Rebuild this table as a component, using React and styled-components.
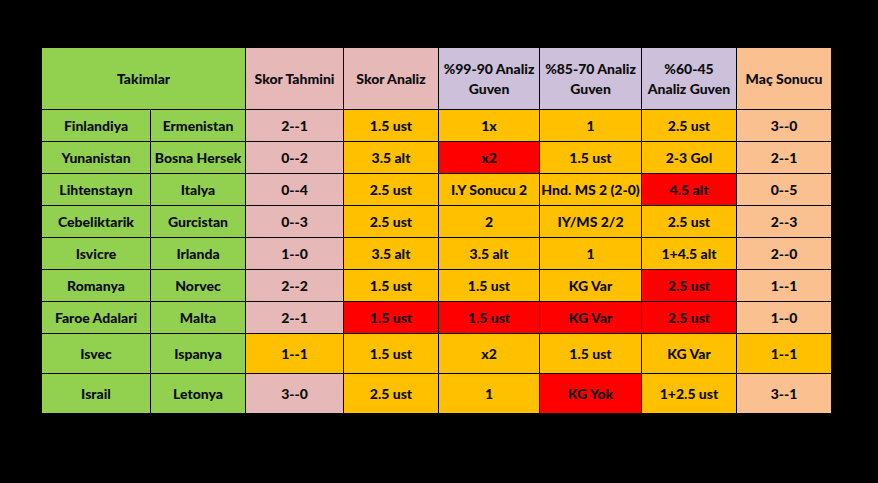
import React from 'react';
import styled, { createGlobalStyle } from 'styled-components';

const GlobalStyle = createGlobalStyle`
    html, body {
        margin: 0;
        padding: 0;
        background: #000;
    }
    body {
        width: 878px;
        height: 483px;
        overflow: hidden;
        font-family: Lato, "Open Sans", "Liberation Sans", sans-serif;
    }
`;

const COLORS = {
    green: '#92d050',
    pink: '#e6b8b7',
    lilac: '#ccc0da',
    orange: '#ffc000',
    red: '#ff0000',
    peach: '#fac090',
};

const Page = styled.div`
    padding: 47px 0 0 41px;
`;

const Table = styled.table`
    border-collapse: collapse;
    table-layout: fixed;
    width: 790px;
    border: 1px solid #000;
`;

const HeadCell = styled.th`
    height: 61px;
    padding: 0 1px;
    border: 1px solid #000;
    background: ${(p) => COLORS[p.$tone]};
    color: #0d0d0d;
    font-size: 14px;
    font-weight: 900;
    line-height: 20px;
    text-align: center;
    white-space: nowrap;
`;

const Cell = styled.td`
    height: ${(p) => (p.$tall ? 39 : 31)}px;
    padding: 0 1px;
    border: 1px solid #000;
    background: ${(p) => COLORS[p.$tone]};
    color: #0d0d0d;
    font-size: 14px;
    font-weight: 900;
    text-align: center;
    white-space: nowrap;
`;

const widths = [109, 95, 98, 95, 101, 102, 95, 95];

// [home, away, [text, tone] x6, tall]
const rows = [
    ['Finlandiya', 'Ermenistan', [['2--1', 'pink'], ['1.5 ust', 'orange'], ['1x', 'orange'], ['1', 'orange'], ['2.5 ust', 'orange'], ['3--0', 'peach']]],
    ['Yunanistan', 'Bosna Hersek', [['0--2', 'pink'], ['3.5 alt', 'orange'], ['x2', 'red'], ['1.5 ust', 'orange'], ['2-3 Gol', 'orange'], ['2--1', 'peach']]],
    ['Lihtenstayn', 'Italya', [['0--4', 'pink'], ['2.5 ust', 'orange'], ['I.Y Sonucu 2', 'orange'], ['Hnd. MS 2 (2-0)', 'orange'], ['4.5 alt', 'red'], ['0--5', 'peach']]],
    ['Cebeliktarik', 'Gurcistan', [['0--3', 'pink'], ['2.5 ust', 'orange'], ['2', 'orange'], ['IY/MS 2/2', 'orange'], ['2.5 ust', 'orange'], ['2--3', 'peach']]],
    ['Isvicre', 'Irlanda', [['1--0', 'pink'], ['3.5 alt', 'orange'], ['3.5 alt', 'orange'], ['1', 'orange'], ['1+4.5 alt', 'orange'], ['2--0', 'peach']]],
    ['Romanya', 'Norvec', [['2--2', 'pink'], ['1.5 ust', 'orange'], ['1.5 ust', 'orange'], ['KG Var', 'orange'], ['2.5 ust', 'red'], ['1--1', 'peach']]],
    ['Faroe Adalari', 'Malta', [['2--1', 'pink'], ['1.5 ust', 'red'], ['1.5 ust', 'red'], ['KG Var', 'red'], ['2.5 ust', 'red'], ['1--0', 'peach']]],
    ['Isvec', 'Ispanya', [['1--1', 'orange'], ['1.5 ust', 'orange'], ['x2', 'orange'], ['1.5 ust', 'orange'], ['KG Var', 'orange'], ['1--1', 'orange']], true],
    ['Israil', 'Letonya', [['3--0', 'pink'], ['2.5 ust', 'orange'], ['1', 'orange'], ['KG Yok', 'red'], ['1+2.5 ust', 'orange'], ['3--1', 'peach']], true],
];

export default function App() {
    return (
        <Page>
            <GlobalStyle />
            <Table>
                <colgroup>
                    {widths.map((w, i) => (
                        <col key={i} style={{ width: w }} />
                    ))}
                </colgroup>
                <thead>
                    <tr>
                        <HeadCell $tone="green" colSpan={2}>Takimlar</HeadCell>
                        <HeadCell $tone="pink">Skor Tahmini</HeadCell>
                        <HeadCell $tone="pink">Skor Analiz</HeadCell>
                        <HeadCell $tone="lilac">%99-90 Analiz<br />Guven</HeadCell>
                        <HeadCell $tone="lilac">%85-70 Analiz<br />Guven</HeadCell>
                        <HeadCell $tone="lilac">%60-45<br />Analiz Guven</HeadCell>
                        <HeadCell $tone="peach">Maç Sonucu</HeadCell>
                    </tr>
                </thead>
                <tbody>
                    {rows.map(([home, away, cells, tall], r) => (
                        <tr key={r}>
                            <Cell $tone="green" $tall={tall}>{home}</Cell>
                            <Cell $tone="green" $tall={tall}>{away}</Cell>
                            {cells.map(([text, tone], c) => (
                                <Cell key={c} $tone={tone} $tall={tall}>{text}</Cell>
                            ))}
                        </tr>
                    ))}
                </tbody>
            </Table>
        </Page>
    );
}
